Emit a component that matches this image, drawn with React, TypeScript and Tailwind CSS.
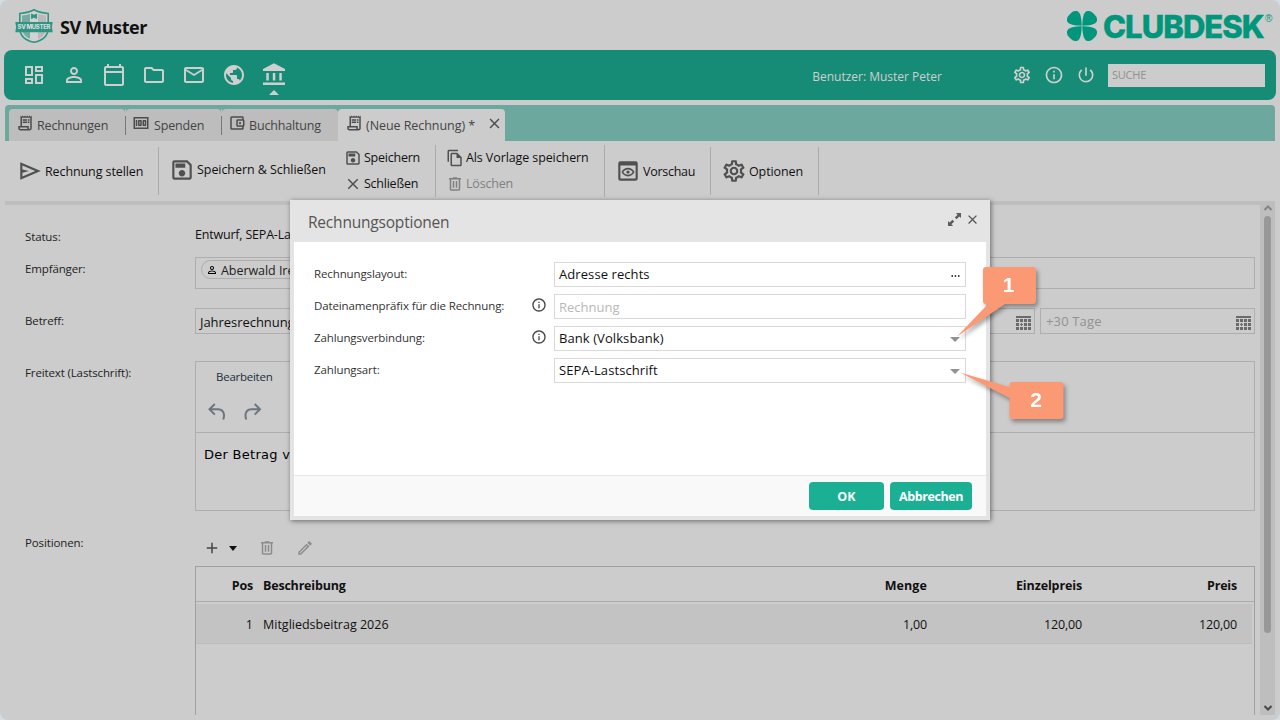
import type { ReactNode } from 'react';
import {
  MdAdd, MdClose, MdInfoOutline, MdMailOutline, MdOutlineAccountBalanceWallet, MdOutlineCalendarToday,
  MdOutlineDashboard, MdOutlineEdit, MdOutlineFileCopy, MdOutlineFolder, MdOutlineMoney, MdOutlinePersonOutline,
  MdOutlinePreview, MdOutlineReceiptLong, MdOutlineSave, MdOutlineSettings, MdPowerSettingsNew, MdPublic,
} from 'react-icons/md';

function TrashIcon({ className }: { className: string }) {
  return (
    <svg viewBox="0 -960 960 960" className={className} fill="currentColor">
      <path d="M280-120q-33 0-56.5-23.5T200-200v-520h-40v-80h200v-40h240v40h200v80h-40v520q0 33-23.5 56.5T680-120H280Zm400-600H280v520h400v-520ZM360-280h80v-360h-80v360Zm160 0h80v-360h-80v360Z" />
    </svg>
  );
}

function SendIcon({ className }: { className: string }) {
  return (
    <svg viewBox="0 -960 960 960" className={className} fill="currentColor">
      <path d="M120-160v-640l760 320-760 320Zm80-120 474-200-474-200v140l240 60-240 60v140Z" />
    </svg>
  );
}

function CalendarGrid() {
  return (
    <svg viewBox="0 0 15 14" className="h-[14px] w-[15px] shrink-0" fill="#6b6b6b" shapeRendering="crispEdges">
      <path d="M0 0h15v2H0z" />
      {[3, 7, 11].map((y) => [0, 4, 8, 12].map((x) => (x === 4 && y === 7 ? null : <path key={`${x}-${y}`} d={`M${x} ${y}h3v3h-3z`} />)))}
      <path d="M5 7h1v1h1v1h-1v1h-1v-1h-1v-1h1z" />
    </svg>
  );
}

function Shield() {
  return (
    <svg viewBox="0 0 38 36" className="h-9 w-[38px]">
      <path d="M19 1.800C14.500 4.500 10 5 4.800 5.500V20c0 8 6 12.500 14.200 14.300 8.200-1.800 14.200-6.300 14.200-14.300V5.500C28 5 23.500 4.500 19 1.800z" fill="#d2d2d2" stroke="#2d9582" strokeWidth="1.600" />
      <path d="M7 7.500c3 0 5-.6 8-1.700v25c-5-2-8-5.500-8-11z" fill="#76ab9f" />
      <path d="M23 5.800c3 1.100 5 1.700 8 1.700V20c0 5.500-3 9-8 11z" fill="#b9b9b9" />
      <path d="M16.500 6l2.500 1.300L21.500 6v4.500L19 9.300l-2.500 1.200z" fill="#2d9582" stroke="#2d9582" strokeWidth=".9" />
      <path d="M.3 14h37.400l-.8 5 .8 5.200H.3l.8-5.200z" fill="#2d9582" />
      <text x="2.500" y="21.300" fill="#dadada" fontFamily="Inter, sans-serif" fontWeight="800" fontSize="6" textLength="33">SV MUSTER</text>
    </svg>
  );
}

function Clover() {
  const leaf = 'M-.3-.3C-6-.5-14.500-1-15-5.500C-15.200-8-14.500-9.500-12-12C-9.500-14.500-8-15.200-5.500-15C-1-14.500-.5-6-.3-.3z';
  return (
    <svg viewBox="-15 -15 30 30" className="h-[30px] w-[30px]" fill="#00967c">
      {[0, 90, 180, 270].map((a) => <path key={a} d={leaf} transform={`rotate(${a})`} />)}
    </svg>
  );
}

function Header() {
  return (
    <header className="flex h-[50px] shrink-0 items-start justify-between">
      <div className="flex pt-2 pl-[15px]">
        <Shield />
        <h1 className="ml-[7px] text-[18px] leading-[39px] font-bold tracking-[-0.4px] text-[#111]">SV Muster</h1>
      </div>
      <div className="flex w-[213px] shrink-0 pt-[11px] whitespace-nowrap text-[#00967c]">
        <Clover />
        <span className="ml-[6px] w-[162px] font-['Inter'] text-[31px] leading-[31px] font-extrabold tracking-[-0.95px] [-webkit-text-stroke:0.4px_#00967c]">CLUBDESK</span>
        <span className="pt-[2px] font-['Liberation_Sans'] text-[10px] leading-[12px]">®</span>
      </div>
    </header>
  );
}

function NavBar() {
  return (
    <nav className="mx-1 flex h-[50px] shrink-0 items-center rounded-lg bg-[#168c76] text-[#cfcfcf]">
      <div className="ml-[18px] flex flex-1 items-center gap-4">
        <MdOutlineDashboard className="size-6" />
        <MdOutlinePersonOutline className="size-6" />
        <MdOutlineCalendarToday className="size-6" />
        <MdOutlineFolder className="size-6" />
        <MdMailOutline className="size-6" />
        <MdPublic className="size-6" />
        <div className="relative">
          <svg viewBox="0 0 24 24" className="size-6" fill="currentColor">
            <path d="M12 .3L1 6v2h22V6zM4.300 10h2.500v7.500H4.300zM10.800 10h2.500v7.500h-2.500zM17.300 10h2.500v7.500h-2.500zM1 19.500h22v2.400H1z" />
          </svg>
          <svg viewBox="0 0 10 5" className="absolute top-[27px] left-[7px] h-[5px] w-[10px]"><path d="M0 5L5 0l5 5z" fill="#cfcfcf" /></svg>
        </div>
      </div>
      <span className="mr-[70px] pt-[3px] text-[12px]">Benutzer: Muster Peter</span>
      <div className="flex items-center gap-3">
        <MdOutlineSettings className="size-5" />
        <MdInfoOutline className="size-5" />
        <MdPowerSettingsNew className="size-5" />
      </div>
      <div className="mr-[11px] ml-3 h-[23px] w-[157px] bg-[#ccc] pl-1 text-[11px] leading-[22px] tracking-[-0.24px] text-[#909090]">SUCHE</div>
    </nav>
  );
}

function Tab({ icon, children, className }: { icon: ReactNode; children: ReactNode; className: string }) {
  return (
    <div className={`flex h-8 items-start rounded-t bg-[#bdbdbd] pt-1.5 ${className}`}>
      {icon}
      <span className="pt-px text-[12.5px] leading-5 tracking-[-0.17px] whitespace-nowrap text-[#444]">{children}</span>
    </div>
  );
}

function Tabs() {
  return (
    <div className="mx-[5px] mt-[5px] flex h-9 shrink-0 rounded-t bg-[#6ca89d] pt-1 pl-1 text-[#4c4c4c]">
      <Tab className="w-[116px] pl-[7px]" icon={<MdOutlineReceiptLong className="-mt-px mr-[3px] size-[18px]" />}>Rechnungen</Tab>
      <div className="flex h-8 w-px items-center bg-[#bdbdbd]"><div className="h-[19px] w-px bg-[#777]" /></div>
      <Tab className="w-[95px] pl-[6px]" icon={<MdOutlineMoney className="-mt-px mr-1 size-[18px]" />}>Spenden</Tab>
      <div className="flex h-8 w-px items-center bg-[#bdbdbd]"><div className="h-[19px] w-px bg-[#777]" /></div>
      <Tab className="w-[116px] pl-[6px]" icon={<MdOutlineAccountBalanceWallet className="-mt-px mr-[3px] size-[18px]" />}>Buchhaltung</Tab>
      <div className="flex h-8 w-[167px] items-start rounded-t bg-[#ccc] pt-1.5 pl-[7px]">
        <MdOutlineReceiptLong className="-mt-px mr-[3px] size-[18px]" />
        <span className="pt-px text-[12.5px] leading-5 tracking-[-0.06px] whitespace-nowrap text-[#444]">(Neue Rechnung) *</span>
        <MdClose className="ml-[11px] size-[17px]" />
      </div>
    </div>
  );
}

function Toolbar() {
  return (
    <div className="mx-[5px] flex h-[60px] shrink-0 items-center text-[12.5px] tracking-[-0.1px] whitespace-nowrap text-[#111]">
      <div className="flex h-12 w-[154px] items-center border-r border-[#aaa] pl-3">
        <SendIcon className="mr-0.5 size-[26px] text-[#505050]" /><span className="pt-0.5">Rechnung stellen</span>
      </div>
      <div className="flex w-[277px] items-center border-r border-[#aaa]">
        <div className="flex w-[181px] items-center pb-[3px] pl-[10px]">
          <MdOutlineSave className="mr-0.5 size-[26px] text-[#505050]" /><span className="pt-px tracking-[-0.06px]">Speichern &amp; Schließen</span>
        </div>
        <div className="flex flex-col pl-[4px] tracking-[-0.24px]">
          <div className="flex h-[26px] items-center"><MdOutlineSave className="mr-0.5 size-[18px] text-[#505050]" />Speichern</div>
          <div className="flex h-[26px] items-center"><MdClose className="mr-0.5 size-[18px] text-[#505050]" />Schließen</div>
        </div>
      </div>
      <div className="flex w-[169px] flex-col border-r border-[#aaa] pl-[10px]">
        <div className="flex h-[26px] items-center"><MdOutlineFileCopy className="mr-0.5 size-[18px] text-[#505050]" />Als Vorlage speichern</div>
        <div className="flex h-[26px] items-center tracking-[-0.19px] text-[#808080]"><TrashIcon className="mr-0.5 size-[18px]" />Löschen</div>
      </div>
      <div className="flex h-12 w-[106px] items-center border-r border-[#aaa] pl-[10px] tracking-[-0.28px]">
        <MdOutlinePreview className="mr-0.5 size-[26px] text-[#505050]" /><span className="pt-0.5">Vorschau</span>
      </div>
      <div className="flex h-12 w-[108px] items-center border-r border-[#aaa] pl-[10px]">
        <MdOutlineSettings className="mr-0.5 size-[26px] text-[#505050]" /><span className="pt-0.5">Optionen</span>
      </div>
    </div>
  );
}

function Row({ label, pad, className, children }: { label: string; pad: string; className: string; children: ReactNode }) {
  return (
    <div className={`flex ${className}`}>
      <div className={`w-[170px] shrink-0 text-[11.5px] leading-4 tracking-[-0.13px] text-[#222] ${pad}`}>{label}</div>
      <div className="min-w-0 flex-1">{children}</div>
    </div>
  );
}

function Form() {
  return (
    <div className="mr-[5px] flex min-w-0 flex-1 flex-col pl-5 text-[12.5px] whitespace-nowrap text-[#111]">
      <Row label="Status:" pad="pt-6" className="h-[52px]">
        <div className="pt-5 leading-5 tracking-[-0.2px]">Entwurf, SEPA-Lastschrift</div>
      </Row>
      <Row label="Empfänger:" pad="pt-1" className="h-[51px]">
        <div className="h-8 border border-[#aeaeae] px-[5px] pt-0.5">
          <div className="flex h-[19px] w-[130px] items-center rounded-full border border-[#aeaeae] pl-1 tracking-[-0.05px] text-[#222]">
            <MdOutlinePersonOutline className="mt-px mr-[3px] size-3 text-black" /><span className="pt-[3px]">Aberwald Irene</span>
          </div>
        </div>
      </Row>
      <Row label="Betreff:" pad="pt-[5px]" className="h-[53px]">
        <div className="flex gap-[5px]">
          <div className="h-[26px] w-[420px] border border-[#aeaeae] pl-1 text-[13px] leading-[26px] tracking-[-0.05px]">Jahresrechnung</div>
          <div className="flex h-[26px] flex-1 items-center justify-end border border-[#aeaeae] pt-[3px] pr-[3px]"><CalendarGrid /></div>
          <div className="flex h-[26px] w-[215px] items-center justify-between border border-[#aeaeae] pr-[3px] pl-[5px] text-[13px] tracking-[0.15px] text-[#929292]">
            <span className="pt-0.5">+30 Tage</span><div className="pt-[3px]"><CalendarGrid /></div>
          </div>
        </div>
      </Row>
      <Row label="Freitext (Lastschrift):" pad="pt-1" className="h-[170px]">
        <div className="h-[150px] border border-[#aeaeae]">
          <div className="h-[71px] border-b border-[#aeaeae] pt-[7px] pl-5">
            <div className="text-[11.5px] leading-4 tracking-[-0.25px] text-[#222f3e]">Bearbeiten</div>
            <svg viewBox="0 0 54 18" className="mt-[18px] -ml-[8px] h-[18px] w-[54px]" fill="none" stroke="#6d7680" strokeWidth="2">
              <path d="M6.800 1L1.500 6.300l5.300 5.300M1.500 6.300h8.500c4.500 0 7.500 4 5.200 10.200M46.700 1l5.300 5.300-5.300 5.300M52 6.300H43.500c-4.500 0-7.500 4-5.200 10.200" />
            </svg>
          </div>
          <div className="pt-3 pl-2 font-['DejaVu_Sans'] text-[13px] leading-5 tracking-[0.28px] text-black">Der Betrag von</div>
        </div>
      </Row>
      <Row label="Positionen:" pad="pt-1" className="flex-1">
        <div className="flex h-[35px] items-center pb-0.5 text-[#8c8c8c]">
          <MdAdd className="ml-2 size-[18px] text-[#444]" />
          <svg viewBox="0 0 8 5" className="mt-0.5 ml-2 h-[5px] w-2"><path d="M0 0h8L4 5z" fill="#111" /></svg>
          <TrashIcon className="ml-[21px] size-[18px]" />
          <MdOutlineEdit className="ml-5 size-[18px]" />
        </div>
        <div className="h-[149px] border border-b-0 border-[#a0a0a0]">
          <div className="flex h-[35px] items-center border-b border-[#aaa] pt-1 font-bold tracking-[-0.2px] text-[#111]">
            <span className="w-[57px] text-right">Pos</span>
            <span className="ml-2.5 flex-1">Beschreibung</span>
            <span className="w-[120px] text-right tracking-[0.1px]">Menge</span>
            <span className="w-[155px] text-right tracking-[-0.12px]">Einzelpreis</span>
            <span className="mr-[17px] w-[155px] text-right">Preis</span>
          </div>
          <div className="mt-0.5 mr-0.5 flex h-10 items-center border-b border-[#bbb] bg-[#c3c3c3] pt-[3px]">
            <span className="w-[57px] text-right">1</span>
            <span className="ml-2.5 flex-1">Mitgliedsbeitrag 2026</span>
            <span className="w-[120px] text-right tracking-[-0.16px]">1,00</span>
            <span className="w-[155px] text-right tracking-[-0.16px]">120,00</span>
            <span className="mr-[15px] w-[155px] text-right tracking-[-0.16px]">120,00</span>
          </div>
        </div>
      </Row>
    </div>
  );
}

function Scrollbar() {
  return (
    <div className="flex w-[15px] shrink-0 flex-col items-center bg-[#bebebe]">
      <svg viewBox="0 0 8 6" className="h-1.5 w-2" fill="none" stroke="#858585" strokeWidth="2"><path d="M.5 5L4 1.500 7.500 5" /></svg>
      <div className="mt-[5px] h-[417px] w-[7px] rounded bg-[#989898]" />
      <svg viewBox="0 0 8 6" className="mt-auto mb-1 h-1.5 w-2" fill="none" stroke="#4a4a4a" strokeWidth="2"><path d="M.5 1L4 4.500 7.500 1" /></svg>
    </div>
  );
}

function DialogField({ label, value, info, placeholder, arrow, dots }: { label: string; value: string; info?: boolean; placeholder?: boolean; arrow?: boolean; dots?: boolean }) {
  return (
    <div className="flex h-[25px]">
      <span className="flex-1 pt-1 text-[11.5px] leading-4 tracking-[-0.12px] text-[#333]">{label}</span>
      {info && <MdInfoOutline className="mt-[3px] mr-[7px] size-4 text-[#444]" />}
      <div className={`flex w-[412px] items-center justify-between border border-[#d9d9d9] pr-[5px] pl-1 text-[13px] ${placeholder ? 'pt-0.5 text-[#b8b8b8]' : 'tracking-[0.08px] text-[#111]'}`}>
        {value}
        {dots && <svg viewBox="0 0 9 2" className="mt-0.5 h-0.5 w-[9px]" fill="#444"><path d="M.5 0h1.500v2H.5zM3.700 0h1.500v2h-1.500zM7 0h1.500v2H7z" /></svg>}
        {arrow && <svg viewBox="0 0 10 5" className="mt-[2px] h-[5px] w-2.5" fill="#929292"><path d="M0 0h10L5 5z" /></svg>}
      </div>
    </div>
  );
}

function Dialog() {
  return (
    <div role="dialog" className="absolute top-[200px] left-[290px] flex h-80 w-[700px] flex-col bg-[#e4e4e4] px-1 pb-1 shadow-[1px_1px_5px_rgba(0,0,0,0.5)]">
      <div className="flex h-[42px] shrink-0 items-start pr-1.5 pl-3.5">
        <h2 className="flex-1 pt-[11px] text-[15.5px] leading-[22px] tracking-[-0.2px] text-[#555]">Rechnungsoptionen</h2>
        <svg viewBox="0 0 14 14" className="mt-[13px] mr-[4px] size-[13px]" fill="#5c5c5c">
          <path d="M8.500 0H14v5.500l-1.800-1.800-3 3-1.900-1.900 3-3zM0 8.500l1.800 1.800 3-3 1.900 1.900-3 3L5.500 14H0z" />
        </svg>
        <MdClose className="mt-3 size-[15px]" color="#555" />
      </div>
      <div className="flex flex-1 flex-col gap-[7px] bg-white pt-5 pr-5 pl-5">
        <DialogField label="Rechnungslayout:" value="Adresse rechts" dots />
        <DialogField label="Dateinamenpräfix für die Rechnung:" value="Rechnung" info placeholder />
        <DialogField label="Zahlungsverbindung:" value="Bank (Volksbank)" info arrow />
        <DialogField label="Zahlungsart:" value="SEPA-Lastschrift" arrow />
      </div>
      <div className="flex h-[41px] shrink-0 justify-end gap-1.5 border-t border-[#e8e8e8] bg-[#f9f9f9] pt-1.5 pr-3.5 text-[12.5px] font-bold text-white">
        <button className="h-7 w-[75px] rounded bg-[#1baf94] pt-0.5 tracking-[0.1px]">OK</button>
        <button className="h-7 w-[82px] rounded bg-[#1baf94] pt-0.5 tracking-[-0.4px]">Abbrechen</button>
      </div>
    </div>
  );
}

function Callouts() {
  return (
    <svg viewBox="0 0 130 170" className="absolute top-[260px] left-[950px] h-[170px] w-[130px] drop-shadow-[2px_3px_2px_rgba(0,0,0,0.35)]" fill="#fa9974">
      <path d="M36 7h47a3 3 0 0 1 3 3v31a3 3 0 0 1-3 3H55L7 76.500 38 44h-2a3 3 0 0 1-3-3V10a3 3 0 0 1 3-3z" />
      <path d="M62.500 122h48a3 3 0 0 1 3 3v31a3 3 0 0 1-3 3h-48a3 3 0 0 1-3-3V138L10 112.500 59.500 127v-2a3 3 0 0 1 3-3z" />
      <g fill="#fff" fontFamily="Liberation Sans, sans-serif" fontSize="21" fontWeight="700" textAnchor="middle">
        <text x="58.500" y="32">1</text>
        <text x="86" y="147">2</text>
      </g>
    </svg>
  );
}

export default function App() {
  return (
    <div className="relative h-[720px] w-[1280px] overflow-hidden bg-[#d3dde6] font-['Open_Sans',sans-serif]">
      <div className="flex h-full flex-col rounded-lg bg-[#ccc]">
        <Header />
        <NavBar />
        <Tabs />
        <Toolbar />
        <div className="mx-[5px] mb-[5px] flex min-h-0 flex-1 border-t-4 border-[#bebebe]">
          <Form />
          <Scrollbar />
        </div>
      </div>
      <Dialog />
      <Callouts />
    </div>
  );
}
